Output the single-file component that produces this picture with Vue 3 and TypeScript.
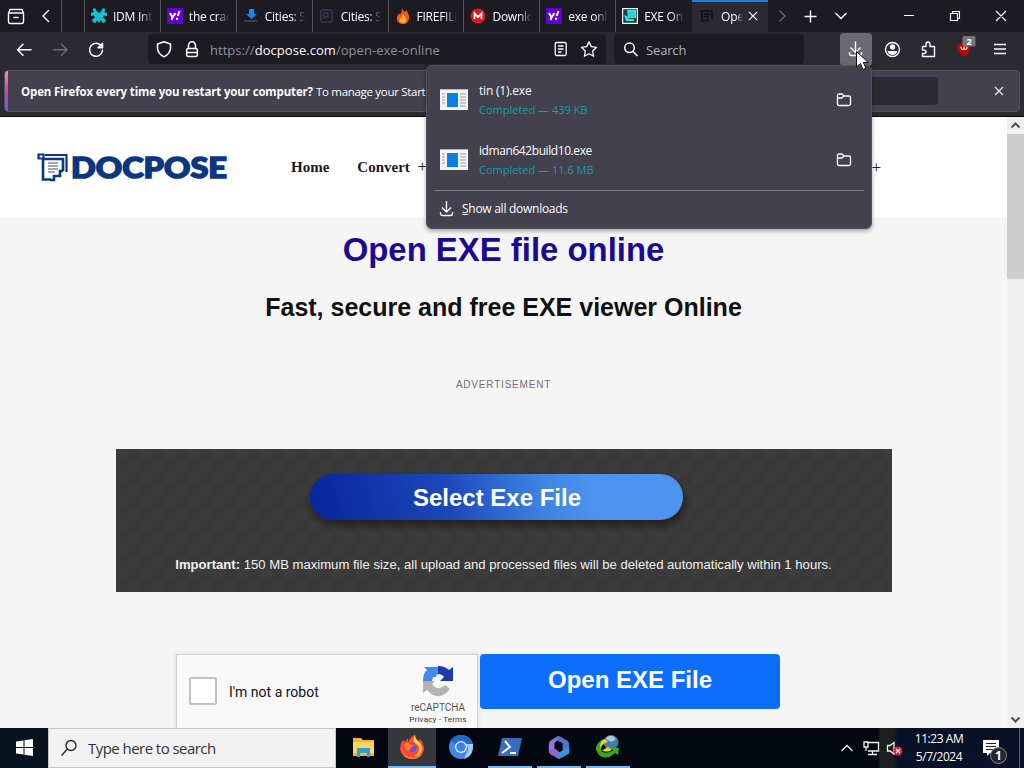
<script setup lang="ts">
interface Tab { icon: string; title: string; active?: boolean }
interface Download { name: string; status: string }

const tabs: Tab[] = [
  { icon: 'paw', title: 'IDM Int' },
  { icon: 'yahoo', title: 'the crac' },
  { icon: 'down', title: 'Cities: S' },
  { icon: 'box', title: 'Cities: S' },
  { icon: 'fire', title: 'FIREFILE' },
  { icon: 'mega', title: 'Downlo' },
  { icon: 'yahoo', title: 'exe onli' },
  { icon: 'exe', title: 'EXE Onl' },
  { icon: 'doc', title: 'Open', active: true },
]
const downloads: Download[] = [
  { name: 'tin (1).exe', status: 'Completed — 439 KB' },
  { name: 'idman642build10.exe', status: 'Completed — 11.6 MB' },
]
</script>

<template>
  <div class="screen">
    <div class="tabstrip">
      <svg class="view" width="61" height="32" viewBox="0 0 61 32" fill="none" stroke="#fbfbfe" stroke-width="1.4" stroke-linecap="round" stroke-linejoin="round">
        <path d="M10 9.500h12M8.500 13h15v8.500q0 2-2 2h-11q-2 0-2-2zM8.500 13l1.500-3.500M23.500 13l-1.500-3.500M14 17.500h4" />
        <path d="M48.500 10.500l-5.500 5.500 5.500 5.500" />
      </svg>
      <div class="pinned"></div>
      <div v-for="(tab, i) in tabs" :key="i" class="tab" :class="{ active: tab.active }">
        <svg class="favicon" width="16" height="16" viewBox="0 0 16 16">
          <g v-if="tab.icon === 'paw'" fill="#18c1d0">
            <path d="M3 0l2 1 .500 2L8 5l2.500-2L11 1l2-1 1.500 2L13 4l3 1v3l-3-.500-1 2.500 2.500 1v3l-3 1-1.500-3L8 15l-2-3-1.500 3-3-1v-3L4 10 3 7.500 0 8V5l3-1L1.500 2z" />
          </g>
          <g v-else-if="tab.icon === 'yahoo'">
            <rect width="16" height="16" fill="#6001d2" />
            <path d="M3 5l2.500 4.500L8.500 5M5.500 9.500L4.500 12M12.500 3L10.700 8" fill="none" stroke="#fff" stroke-width="2" />
            <circle cx="10" cy="10.700" r="1.200" fill="#fff" />
          </g>
          <g v-else-if="tab.icon === 'down'">
            <path d="M6 1h5v5h3l-5.500 5L3 6h3z" fill="#1389ee" /><path d="M1 12h13v2H1z" fill="#443e3e" />
          </g>
          <g v-else-if="tab.icon === 'box'" fill="none" stroke="#40354a" stroke-width="1.500">
            <rect x="2" y="2" width="11" height="12" rx="1" /><path d="M5 11V5h4v4H6" />
          </g>
          <g v-else-if="tab.icon === 'fire'">
            <path d="M7 0q1 3 3 4l1-2q4 5 3 9-1 5-6 5-7 0-6-7l2-4 1 2q2-3 2-7z" fill="#ee5a16" />
            <path d="M8 6q4 4 3 7-1 3-4 2-4-1-2-5l1 1z" fill="#ffae2c" />
          </g>
          <g v-else-if="tab.icon === 'mega'">
            <circle cx="8" cy="8" r="7.500" fill="#e3161c" /><path d="M4.500 11V5.500L8 9l3.500-3.500V11" fill="none" stroke="#fff" stroke-width="1.800" />
          </g>
          <g v-else-if="tab.icon === 'exe'">
            <rect width="16" height="16" fill="#f2ffff" /><rect x="1.200" y="1.200" width="13.600" height="13.600" fill="#174347" />
            <path d="M5 2h9v8H6zM2 7l3 1 2 3h5v2H4z" fill="#3bdbe0" /><path d="M7 5h5M7 8h5" stroke="#2ab1b6" />
          </g>
          <g v-else fill="none" stroke="#101014" stroke-width="1.400"><path d="M1 3h12v8M3 3v10h6v-2M5 6h6M5 8.500h5" /></g>
        </svg>
        <span class="title">{{ tab.title }}</span>
        <svg v-if="tab.active" class="close" width="10" height="10" viewBox="0 0 10 10"><path d="M.8.8l8.400 8.400M9.200.8L.8 9.200" stroke="#fbfbfe" stroke-width="1.100" /></svg>
      </div>
      <svg width="256" height="32" viewBox="0 0 256 32" fill="none" stroke="#fbfbfe" stroke-width="1.400">
        <path d="M11.500 10.500l5.500 5.500-5.500 5.500" stroke="#6a6971" />
        <path d="M36.500 16.500h12M42.500 10.500v12M67.500 13l5.500 5.500 5.500-5.500" />
        <g stroke-width="1.100"><path d="M136 15.500h10M182.500 13.500h7v7h-7zM184.500 13v-1.500h7v7H190M228 11l10 10M238 11l-10 10" /></g>
      </svg>
    </div>

    <div class="toolbar">
      <svg class="navicons" width="148" height="34" viewBox="0 32 148 34" fill="none" stroke="#fbfbfe" stroke-width="1.500" stroke-linecap="round" stroke-linejoin="round">
        <path d="M31 49.800H17.500M23 44.300l-5.500 5.500 5.500 5.500" />
        <path d="M53.500 49.800H67M61.500 44.300l5.500 5.500-5.500 5.500" stroke="#6c6b73" />
        <path d="M101.500 46.300A6.500 6.500 0 1 0 102.500 50.300M102.500 43.300v4.500H98z" />
      </svg>
      <div class="url">
        <svg width="62" height="30" viewBox="148 34 62 30" fill="none" stroke="#fbfbfe" stroke-width="1.500" stroke-linejoin="round">
          <path d="M164 41.800l6.500 2.200v4q0 5.500-6.500 8.800-6.500-3.300-6.500-8.800v-4z" />
          <rect x="186.700" y="48.500" width="10.600" height="8" rx="1.500" /><path d="M188.500 48.500v-3.300a3.500 3.500 0 0 1 7 0v3.300M187 52.500h10" />
        </svg>
        <span class="address">https://<b>docpose.com</b>/open-exe-online</span>
        <svg class="urlend" width="56" height="30" viewBox="550 34 56 30" fill="none" stroke="#fbfbfe" stroke-width="1.300" stroke-linejoin="round">
          <rect x="555.200" y="42.500" width="11" height="13" rx="1.500" /><path d="M558 46h5.500M558 49h5.500M558 52h3.500" />
          <path d="M589 41.800l2.300 4.800 5.200.7-3.800 3.700.9 5.300-4.600-2.500-4.600 2.500.9-5.300-3.800-3.700 5.200-.7z" />
        </svg>
      </div>
      <div class="search">
        <svg width="32" height="30" viewBox="0 0 32 30" fill="none" stroke="#fbfbfe" stroke-width="1.500"><circle cx="20.500" cy="13.800" r="4.800" /><path d="M24 17.500l4.500 4.500" /></svg>
        <span>Search</span>
      </div>
      <svg class="actions" width="184" height="34" viewBox="840 32 184 34" fill="none" stroke="#fbfbfe" stroke-width="1.400" stroke-linejoin="round">
        <rect x="840" y="33" width="32" height="33" rx="4" fill="#6b6a70" stroke="none" />
        <path d="M855.500 41.500v10.500M850.500 47.500l5 5 5-5M849.500 52v1.500q0 2 2 2h8q2 0 2-2V52" />
        <circle cx="892.500" cy="49.500" r="7" /><circle cx="892.500" cy="47" r="2.700" fill="#fbfbfe" stroke="none" /><path d="M887.500 51h10q-1 4-5 4t-5-4z" fill="#fbfbfe" stroke="none" />
        <path d="M922.500 46.500h3.500v-2q0-2.500 2-2.500t2 2.500v2h4.500v10h-12v-3h1.500q2 0 2-1.700t-2-1.700h-1.500z" />
        <path d="M960 43h8l2 2v5l-2.500 4.500-3.500 2-3.500-2L957 50v-4z" fill="#c00000" stroke="none" />
        <path d="M961 46.500q0 3 1.500 3t1.500-2.500q0 2.500 1.500 2.500t1.500-3" stroke-width="1.100" />
        <rect x="962.500" y="36" width="13" height="10.500" rx="1.500" fill="#74777a" stroke="none" />
        <text x="969" y="45" class="badge" text-anchor="middle">2</text>
        <path d="M994 44.500h12M994 49h12M994 53.500h12" />
      </svg>
    </div>

    <div class="notice-area">
      <div class="notice">
        <span class="stripe"></span>
        <p><strong>Open Firefox every time you restart your computer?</strong> <span>To manage your Start</span></p>
        <div class="notice-button"></div>
        <svg width="10" height="10" viewBox="0 0 10 10"><path d="M1 1l8 8M9 1L1 9" stroke="#dedee2" stroke-width="1.400" /></svg>
      </div>
    </div>

    <div class="viewport">
      <main>
        <header>
          <svg class="logo" width="192" height="32" viewBox="0 0 192 32">
            <g fill="none" stroke="#0b3681">
              <path d="M1.500 2.500h5v4h-5zM8 3h21.500v17" stroke-width="2.200" />
              <path d="M6 7h20v12M6 7v20.500h8M26 19h-3v5h-6v4h-4" stroke-width="2.600" />
            </g>
            <path d="M11 11h10M11 14h10M11 17h10M11 20h7" stroke="#544c55" stroke-width="1.200" />
            <text x="34" y="25.500" textLength="156" lengthAdjust="spacingAndGlyphs">DOCPOSE</text>
          </svg>
          <nav><span>Home</span><span>Convert <i>+</i></span></nav>
          <i class="more">+</i>
        </header>
        <h1>Open EXE file online</h1>
        <h2>Fast, secure and free EXE viewer Online</h2>
        <p class="ad">ADVERTISEMENT</p>
        <section class="upload">
          <button class="select">Select Exe File</button>
          <p><b>Important:</b> 150 MB maximum file size, all upload and processed files will be deleted automatically within 1 hours.</p>
        </section>
        <div class="submit">
          <div class="captcha">
            <span class="check"></span>
            <span class="human">I'm not a robot</span>
            <div class="brand">
              <svg width="34" height="34" viewBox="0 0 34 34">
                <path d="M2 17Q2 9 6 6L3 3h14v7q-2 1-2 3l-3 0-1 4z" fill="#4389ed" />
                <path d="M17 2q7 0 11 4l4-3v14H19l4-4q-2-3-6-3z" fill="#1c3aa9" />
                <path d="M2 17h12l-3 3q6 8 13 1l5 4Q18 39 6 26l-4 3z" fill="#b3b3b3" />
              </svg>
              <span>reCAPTCHA</span><small>Privacy - Terms</small>
            </div>
          </div>
          <button class="open">Open EXE File</button>
        </div>
      </main>
      <div class="scrollbar">
        <svg width="17" height="17" viewBox="0 0 17 17"><path d="M4.500 10.500l4-4 4 4" fill="none" stroke="#505050" stroke-width="2" /></svg>
        <div class="thumb"></div>
        <svg class="bottom" width="17" height="17" viewBox="0 0 17 17"><path d="M4.500 6.500l4 4 4-4" fill="none" stroke="#505050" stroke-width="2" /></svg>
      </div>
    </div>

    <footer class="taskbar">
      <div class="start"><svg width="17" height="17" viewBox="0 0 17 17" fill="#fff"><path d="M0 2.500l7.500-1V8H0zM8.500 1.300L17 0v8H8.500zM0 9h7.500v6.500L0 14.500zM8.500 9H17v8l-8.500-1.200z" /></svg></div>
      <div class="winsearch">
        <svg width="18" height="18" viewBox="0 0 18 18" fill="none" stroke="#222" stroke-width="1.300"><circle cx="11" cy="6.500" r="5" /><path d="M7.500 10L1.500 16.500" /></svg>
        <span>Type here to search</span>
      </div>
      <div class="apps">
        <div><svg width="24" height="24" viewBox="0 0 24 24"><path d="M2 3h8l2 2h11v16H2z" fill="#f5b52c" /><path d="M2 7h21v11H2z" fill="#ffd467" /><path d="M6 22v-9h13v9h-3v-4H9v4z" fill="#349bd6" /></svg></div>
        <div class="current">
          <svg width="26" height="26" viewBox="0 0 26 26">
            <path d="M4 6l2 2 3-4v4q3-6 7-7 0 4 4 6l1-2q4 5 4 10-1 9-11 10Q3 25 1 15q0-5 3-9z" fill="#ff463e" />
            <path d="M16 1q0 4 4 7 4 4 3 9-2 5-8 5 5-2 5-7 0-4-4-6-3-3 0-8z" fill="#ffd43b" />
            <path d="M3 16q3 8 11 7 7-1 9-8 1 9-8 10Q5 26 3 16z" fill="#ff7a26" />
            <path d="M8 10q4-2 7 0l3 3q-1 5-5 5-5 0-6-5z" fill="#8444cf" /><path d="M5 10q4-3 6 0l4 1-3 3-2 3q-4-1-5-7z" fill="#ff8316" />
          </svg>
        </div>
        <div><svg width="26" height="26" viewBox="0 0 26 26"><circle cx="13" cy="13" r="12" fill="#4488ea" /><path d="M13 13L2 7q5-7 13-6 8 2 10 9z" fill="#2869cf" /><path d="M25 10q1 12-9 15l4-9q1-4-3-6z" fill="#a4c8fa" /><circle cx="13" cy="13" r="6" fill="#e7f1ff" /><circle cx="13" cy="13" r="4.700" fill="#3b83eb" /></svg></div>
        <div class="running stacked"><svg width="26" height="24" viewBox="0 0 26 24"><path d="M5 3h20l-4 18H1z" fill="#376fc0" /><path d="M8 6l5 6-8 6M13 18h6" fill="none" stroke="#fff" stroke-width="2" /></svg></div>
        <div class="running"><svg width="24" height="26" viewBox="0 0 26 26"><path d="M12 1L4 6Q2 7 2 10v8l6 4V10q0-3 4-4l5 3V3z" fill="#8f77d8" /><path d="M12 1l10 5q2 1 2 4v8l-7 3V9l-5-3q-2-3 0-5z" fill="#5270ce" /><path d="M2 16l7-1 5 4 10-4v3q0 2-2 3l-9 5-9-5q-2-1-2-4z" fill="#a15fce" /><path d="M13 19l11-6v7l-11 6-3-2z" fill="#3993d9" /></svg></div>
        <div class="running"><svg width="26" height="26" viewBox="0 0 26 26"><circle cx="16" cy="8.500" r="7.500" fill="#3e7dab" /><path d="M11 4q6-5 10 1l-4 3-5-2z" fill="#b3c7d3" /><path d="M1 16q1-9 9-11l3 3q-8 2-7 9l7-4 4 3-5 5z" fill="#e6d51c" /><path d="M1 16q0-7 7-11-5 7-1 12 5 3 10-1l-3-3 10 1-1 7-3-2q-9 8-16 2z" fill="#3ba526" /><path d="M7 17q5 3 11-1" stroke="#153c12" fill="none" stroke-width="1.500" /></svg></div>
      </div>
      <svg class="tray" width="75" height="40" viewBox="833 728 75 40" fill="none" stroke="#f2f2f2" stroke-width="1.300">
        <path d="M841.500 751l5.500-5.500 5.500 5.500" /><path d="M867 742.500h11.500v8.500H868M872.500 751v3.500M868 754.500h9M864 742h4v5h-4zM866 747v4" />
        <path d="M887.500 745.500h2.500l4-3v11.500l-4-3h-2.500z" /><circle cx="898" cy="751" r="4.500" fill="#d52436" stroke="none" /><path d="M896 749l4 4M900 749l-4 4" stroke-width="1.200" />
      </svg>
      <div class="clock"><span>11:23 AM</span><span>5/7/2024</span></div>
      <svg class="action" width="54" height="40" viewBox="970 728 54 40"><path d="M983 740h16v13h-9l-3 3v-3h-4z" fill="#fff" /><path d="M986 743.500h10M986 746.500h10M986 749.500h7" stroke="#17203a" /><circle cx="998.500" cy="755.500" r="8" fill="#26272c" stroke="#898b91" /><text x="998.500" y="760" text-anchor="middle">1</text><path d="M1019.500 728v40" stroke="#59616c" /></svg>
    </footer>

    <aside class="downloads">
      <div v-for="item in downloads" :key="item.name" class="download">
        <svg class="thumbnail" width="28" height="21" viewBox="0 0 28 21"><path d="M0 0h28v21H0z" fill="#f4f4f4" /><path d="M0 .5h28" stroke="#b8b8bb" /><path d="M7 4h11v14H7z" fill="#087fe1" /><path d="M2 5h3M2 8h3M2 11h3M2 14h3M20 5h6M20 8h6M20 11h6M20 14h6M20 17h6" stroke="#9b9b9f" /></svg>
        <div class="fileinfo"><span>{{ item.name }}</span><em>{{ item.status }}</em></div>
        <svg class="folder" width="16" height="14" viewBox="0 0 16 14" fill="none" stroke="#fbfbfe" stroke-width="1.300" stroke-linejoin="round"><path d="M1.500 2.500q0-1.500 1.500-1.500h3l2 2h5q1.500 0 1.500 1.500v6.500q0 1.500-1.500 1.500H3q-1.500 0-1.500-1.500zM1.500 5h4.300L8 3" /></svg>
      </div>
      <div class="all">
        <svg width="16" height="17" viewBox="0 0 16 17" fill="none" stroke="#fbfbfe" stroke-width="1.300"><path d="M7.500 1v11M3 7.500l4.500 4.500L12 7.500M1.500 12v1.500q0 2 2 2h8q2 0 2-2V12" /></svg>
        <span><u>S</u>how all downloads</span>
      </div>
    </aside>
    <svg class="cursor" width="14" height="20" viewBox="0 0 14 20"><path d="M.5.500v15.500l4-3.500 2.500 6 3-1.300-2.700-5.700h5z" fill="#fff" stroke="#111" /></svg>
  </div>
</template>

<style>
html, body { margin: 0; overflow: hidden; }
</style>
<style scoped>
* { box-sizing: border-box; }
.screen { position: relative; width: 1024px; height: 768px; overflow: hidden; display: flex; flex-direction: column; background: #f5f5f5; font-family: "Open Sans", "Noto Sans", sans-serif; }
svg { display: block; flex: none; }
p, h1, h2 { margin: 0; }
button { border: 0; padding: 0; }
.tabstrip { height: 32px; display: flex; background: #1c1b22; color: #fbfbfe; }
.view { margin-right: -1px; }
.pinned { width: 25px; border-left: 1px solid transparent; border-right: 1px solid #55545b; box-shadow: inset 1px 0 #55545b; }
.tab { width: 76px; display: flex; align-items: center; padding-left: 6px; border-right: 1px solid #55545b; overflow: hidden; font-size: 12px; }
.tab:first-of-type { padding-left: 5px; }
.tab:nth-of-type(9) { border-color: transparent; }
.tab.active { background: #2b2a33; border: 0; border-top: 2px solid #1781e9; padding-left: 7px; padding-bottom: 2px; }
.title { width: 40px; margin-left: 6px; overflow: hidden; white-space: nowrap; letter-spacing: -.25px; mask-image: linear-gradient(90deg, #000 68%, transparent 100%); }
.active .title { width: 22px; margin-left: 6px; }
.close { margin-left: 5px; }
.toolbar { height: 34px; display: flex; align-items: center; background: #2b2a33; }
.url { width: 458px; height: 30px; display: flex; align-items: center; background: #1c1b22; border-radius: 4px; }
.address { padding-top: 2px; color: #8f8f98; font-size: 13px; letter-spacing: .04px; }
.address b { font-weight: 400; color: #fbfbfe; }
.urlend { margin-left: auto; }
.search { width: 190px; height: 30px; margin-left: 8px; display: flex; align-items: center; background: #1c1b22; border-radius: 4px; color: #b5b4bb; font-size: 13px; }
.search svg { margin-left: -5px; }
.search span { margin-left: 5px; padding-top: 2px; letter-spacing: -.15px; }
.actions { margin-left: 36px; }
.badge { font: bold 9px "Open Sans", sans-serif; fill: #fff; stroke: none; }
.notice-area { height: 51px; padding: 4px 4px 5px; background: #2b2a33; border-bottom: 1px solid #08080b; }
.notice { height: 42px; display: flex; align-items: center; background: #42414d; border: 1px solid #52515d; border-radius: 4px; color: #fbfbfe; overflow: hidden; font-size: 11.500px; }
.stripe { width: 3px; height: 42px; background: linear-gradient(#ff9a73, #cb43a8 50%, #7157dc); }
.notice p { width: 420px; margin-left: 13px; white-space: nowrap; }
.notice strong { letter-spacing: -.15px; }
.notice p span { letter-spacing: -.3px; }
.notice-button { width: 87px; height: 28px; margin-left: 410px; margin-right: auto; border-radius: 4px; background: #2b2a33; }
.notice > svg { margin-right: 15px; }
.viewport { height: 611px; display: flex; overflow: hidden; }
main { width: 1007px; display: flex; flex-direction: column; align-items: center; font-family: "Liberation Sans", Arial, sans-serif; }
header { width: 1007px; height: 101px; flex: none; display: flex; align-items: center; background: #fff; }
.logo { margin-left: 37px; }
.logo text { font: 900 28px Lato, sans-serif; fill: #0b3681; stroke: #0b3681; stroke-width: 1.500px; }
nav { margin-left: 62px; display: flex; align-items: baseline; gap: 28px; font: bold 15px "Liberation Serif", serif; color: #181818; }
header i { font: 17px "Liberation Serif", serif; color: #222; }
nav i { margin-left: 4px; line-height: 10px; }
.more { margin-left: auto; margin-right: 126px; }
h1 { margin-top: 12px; font-size: 32.900px; line-height: 39px; color: #1a0993; }
h2 { margin-top: 22px; font-size: 25px; line-height: 32px; color: #111; }
.ad { margin-top: 56px; font-size: 10px; line-height: 12px; letter-spacing: .8px; color: #707070; }
.upload { width: 776px; height: 143px; flex: none; margin-top: 58px; display: flex; flex-direction: column; align-items: center; background: repeating-conic-gradient(#393939 0 25%, #3c3c3c 0 50%) 0 0 / 24px 24px; color: #f0f0f0; }
.select { width: 373px; height: 46px; margin-top: 25px; margin-right: 15px; padding: 2px 0 0 2px; border-radius: 23px; background: linear-gradient(80deg, #05259b, #1d49bb 38%, #3f83e0 62%, #4b93ef 75%, #4d94ef); box-shadow: 2px 5px 8px rgba(20, 12, 5, .6); color: #fff; font: bold 24px "Liberation Sans", Arial, sans-serif; }
.upload p { margin-top: 36px; font-size: 13.120px; line-height: 17px; white-space: nowrap; }
.submit { width: 655px; height: 74px; flex: none; margin-top: 62px; display: flex; align-items: flex-start; gap: 2px; }
.captcha { width: 302px; height: 78px; display: flex; align-items: flex-start; background: #f9f9f9; border: 1px solid #d3d3d3; box-shadow: 0 0 4px 1px rgba(0,0,0,.08); font-family: Roboto, sans-serif; color: #111; }
.check { width: 28px; height: 28px; margin: 22px 0 0 12px; border: 2px solid #c1c1c1; border-radius: 2px; background: #fff; }
.human { margin: 27px 0 0 12px; font-size: 14px; line-height: 20px; }
.brand { width: 64px; margin: 9px 7px 0 auto; display: flex; flex-direction: column; align-items: center; color: #555; }
.brand span { margin-top: 4px; font-size: 10px; line-height: 12px; }
.brand small { font-size: 8px; line-height: 11px; letter-spacing: .2px; white-space: nowrap; color: #333; }
.open { width: 300px; height: 55px; padding-bottom: 4px; border-radius: 4px; background: #0d6efd; color: #fff; font: bold 24px "Liberation Sans", Arial, sans-serif; }
.scrollbar { width: 17px; display: flex; flex-direction: column; background: #f0f0f0; }
.thumb { height: 145px; background: #cdcdcd; }
.bottom { margin-top: auto; }
.taskbar { height: 40px; display: flex; background: #030810; color: #fff; }
.start { width: 48px; padding: 11px 0 0 16px; background: #04131d; }
.winsearch { width: 288px; display: flex; align-items: center; padding-left: 11px; background: #f2f2f2; border: 1px solid #c7c7c7; color: #333; font-size: 15px; }
.winsearch span { margin-left: 10px; letter-spacing: -.55px; }
.apps { display: flex; gap: 1px; margin-left: 3px; }
.apps > div { width: 48px; display: flex; align-items: center; justify-content: center; border-bottom: 2px solid transparent; }
.apps .current { background: #34383d; border-color: #76b9ed; }
.apps .running { border-image: linear-gradient(90deg, transparent 8%, #76b9ed 8% 92%, transparent 92%) 2; }
.tray { margin-left: auto; background: linear-gradient(90deg, transparent 60%, #1c1e22 63% 80%, #081128 87%); }
.clock { width: 62px; display: flex; flex-direction: column; align-items: center; background: #081128; padding-top: 2px; font-size: 12px; line-height: 18px; letter-spacing: -.45px; white-space: nowrap; }
.action { background: #081128; }
.action text { fill: #fff; font: bold 12px "Open Sans", sans-serif; }
.downloads { position: absolute; left: 426px; top: 65px; width: 446px; height: 164px; padding: 4px 7px; background: #42414d; border: 1px solid #55545f; border-radius: 6px; box-shadow: 0 2px 4px rgba(0,0,0,.35); color: #fbfbfe; font-size: 12px; }
.download { height: 60px; display: flex; align-items: center; padding: 0 12px 0 6px; }
.thumbnail { margin: 0 11px 2px 0; }
.fileinfo { flex: 1; display: flex; flex-direction: column; line-height: 19px; letter-spacing: -.2px; }
.download:nth-child(2) .fileinfo span { letter-spacing: -.42px; }
.fileinfo em { font-style: normal; font-size: 11px; letter-spacing: 0; color: #199baa; }
.all { height: 36px; display: flex; align-items: center; gap: 7px; padding-left: 5px; border-top: 1px solid #7d7c86; letter-spacing: -.27px; }
.cursor { position: absolute; left: 856px; top: 51px; }
</style>
